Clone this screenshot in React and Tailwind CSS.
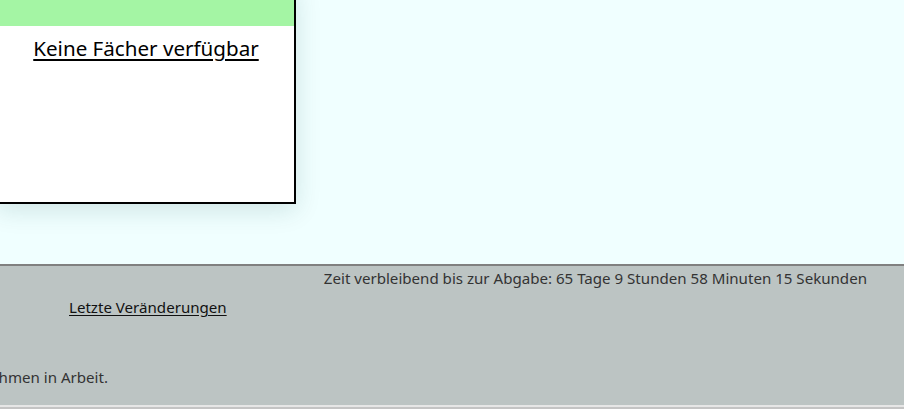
export default function App() {
  return (
    <div
      className="w-[904px] h-[409px] overflow-hidden bg-[#f0ffff] flex flex-col"
      style={{ fontFamily: '"Noto Sans", "Open Sans", sans-serif' }}
    >
      <main className="h-[264px] shrink-0">
        <SubjectCard />
      </main>
      <Footer />
    </div>
  );
}

function SubjectCard() {
  return (
    <div className="-ml-[4px] -mt-[16px] w-[300px] h-[220px] bg-white border-2 border-black shadow-[0_6px_24px_rgba(0,70,70,0.14)] flex flex-col">
      <div className="h-[40px] bg-[#a4f5a4] shrink-0" />
      <div className="pt-[7px] text-center">
        <a href="#" className="text-[20.6px] leading-[30px] text-black underline underline-offset-[3px]">
          Keine Fächer verfügbar
        </a>
      </div>
    </div>
  );
}

function Footer() {
  return (
    <footer className="h-[145px] shrink-0 bg-[#bcc4c3] border-t-2 border-[#808080] flex flex-col text-[15.1px] text-[#333333]">
      <div className="flex justify-end pr-[37px] pt-[1px] leading-[22px]">
        Zeit verbleibend bis zur Abgabe: 65 Tage 9 Stunden 58 Minuten 15 Sekunden
      </div>
      <div className="pl-[69px] pt-[7px] leading-[22px]">
        <a href="#" className="text-[#111111] underline underline-offset-2">
          Letzte Veränderungen
        </a>
      </div>
      <div className="mt-[48px] w-[108px] overflow-hidden flex justify-end whitespace-nowrap leading-[22px]">
        Die Seite ist wegen Wartungsmaßnahmen in Arbeit.
      </div>
      <div className="mt-auto h-[4px] border-t-2 border-[#e6e6e6] bg-[#c4c4c4]" />
    </footer>
  );
}
